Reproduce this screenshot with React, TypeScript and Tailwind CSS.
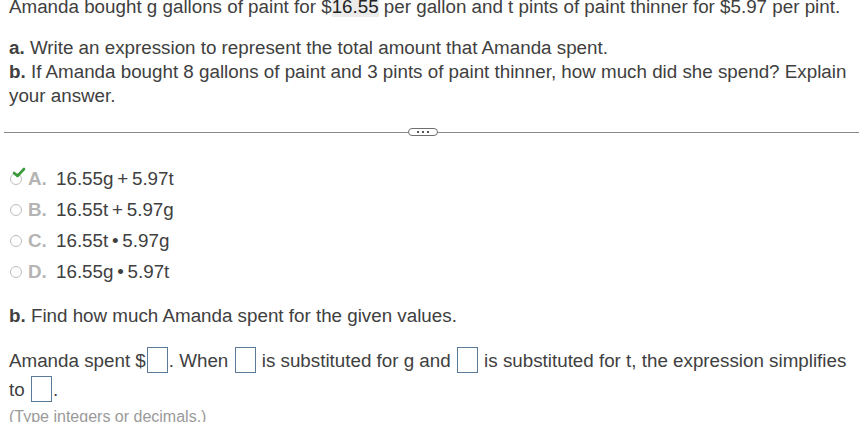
import React from 'react'

const Box = () => (
    <span className="inline-block align-middle w-[21px] h-[26px] border border-[#5b7a99] bg-white mx-[1px] -mt-[4px]" />
)

const options = [
    { letter: 'A.', expr: <>16.55g{'\u2009'}+{'\u2009'}5.97t</>, checked: true },
    { letter: 'B.', expr: <>16.55t{'\u2009'}+{'\u2009'}5.97g</>, checked: false },
    { letter: 'C.', expr: <>16.55t{'\u2009'}•{'\u2009'}5.97g</>, checked: false },
    { letter: 'D.', expr: <>16.55g{'\u2009'}•{'\u2009'}5.97t</>, checked: false },
]

const Radio = ({ checked }: { checked: boolean }) => (
    <span className="relative inline-flex w-[14px] h-[14px] items-center justify-center">
        <span className="w-[12px] h-[12px] rounded-full border border-[#bdbdbd] bg-white" />
        {checked && (
            <svg className="absolute -top-[5px] left-[3px]" width="14" height="12" viewBox="0 0 14 12">
                <path d="M2 6 L5.5 9 L12 2" fill="none" stroke="#3a9a3a" strokeWidth="2.6" strokeLinecap="round" strokeLinejoin="round" />
            </svg>
        )}
    </span>
)

const App = () => {
    return (
        <div className="w-[863px] h-[422px] overflow-hidden bg-white text-[#404040] text-[18.8px] leading-[24px] font-['Liberation_Sans',Arial,sans-serif]">
            <div className="pl-[9px] pr-[4px] -mt-[5px]">
                <p>
                    Amanda bought g gallons of paint for $<span className="bg-[#ebebeb] text-[#222]">16.55</span> per gallon and t pints of paint thinner for $5.97 per pint.
                </p>
                <p className="mt-[17px]"><b>a.</b> Write an expression to represent the total amount that Amanda spent.</p>
                <p><b>b.</b> If Amanda bought 8 gallons of paint and 3 pints of paint thinner, how much did she spend? Explain your answer.</p>
            </div>

            <div className="relative mx-[4px] mt-[24px] h-[1px] bg-[#8a8a8a]">
                <div className="absolute left-[404px] -top-[4px] w-[30px] h-[8px] rounded-full border border-[#6f6f6f] bg-white flex items-center justify-center gap-[3px]">
                    <span className="w-[2px] h-[2px] bg-[#555]" />
                    <span className="w-[2px] h-[2px] bg-[#555]" />
                    <span className="w-[2px] h-[2px] bg-[#555]" />
                </div>
            </div>

            <div className="mt-[34px] pl-[9px] flex flex-col gap-[7px]">
                {options.map((o) => (
                    <div key={o.letter} className="flex items-center h-[24px]">
                        <Radio checked={o.checked} />
                        <span className="ml-[5px] w-[28px] font-bold text-[#b4b4b4]">{o.letter}</span>
                        <span>{o.expr}</span>
                    </div>
                ))}
            </div>

            <div className="pl-[9px] pr-[4px]">
                <p className="mt-[20px]"><b>b.</b> Find how much Amanda spent for the given values.</p>
                <p className="mt-[18px] leading-[29px]">
                    Amanda spent $<Box />. When <Box /> is substituted for g and <Box /> is substituted for t, the expression simplifies to <Box />.
                </p>
                <p className="mt-[3px] text-[16px] leading-[20px] text-[#9a9a9a]">(Type integers or decimals.)</p>
            </div>
        </div>
    )
}

export default App
